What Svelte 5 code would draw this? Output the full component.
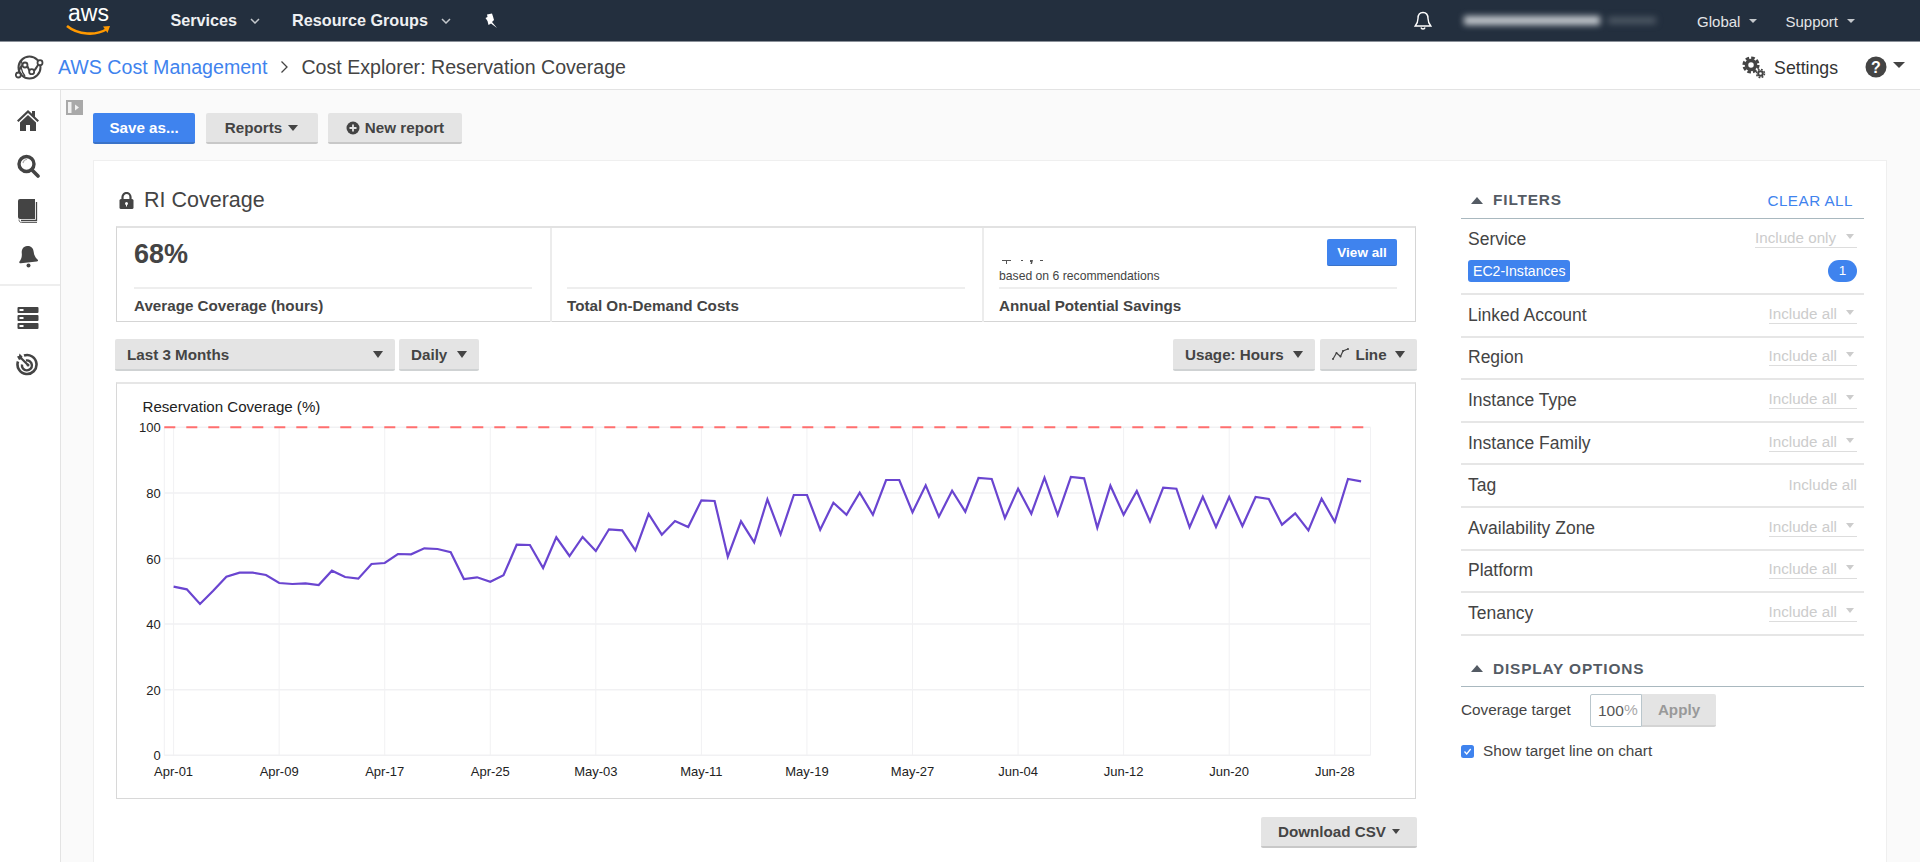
<script>
  const ys = [500,508,552,512,470,458,458,465,489,492,490,495,452,471,476,432,429,402,403,385,387,397,477,472,485,466,374,375,444,352,408,351,393,328,331,391,282,344,
    303,321,241,243,410,304,367,238,343,225,225,329,248,284,218,284,180,180,277,196,290,212,275,174,177,294,206,281,173,285,171,175,323,197,284,213,304,203,206,322,230,321,231,318,231,237,314,280,331,236,305,177,184];
  const X0 = 173.6, DX = 13.195;
  const points = ys.map((y, i) => `${(X0 + i * DX).toFixed(1)},${(420 + y / 3).toFixed(1)}`).join(' ');
  const ticks = ['Apr-01','Apr-09','Apr-17','Apr-25','May-03','May-11','May-19','May-27','Jun-04','Jun-12','Jun-20','Jun-28']
    .map((label, i) => ({ label, x: X0 + i * 8 * DX }));
  const yAxis = [100, 80, 60, 40, 20, 0].map((v) => ({ v, y: 755.3 - v * 3.28 }));
  const filters = [
    { name: 'Linked Account' }, { name: 'Region' }, { name: 'Instance Type' }, { name: 'Instance Family' },
    { name: 'Tag', plain: true }, { name: 'Availability Zone' }, { name: 'Platform' }, { name: 'Tenancy' }
  ];
</script>

<div class="page">
  <header class="topbar">
    <div class="logo">
      <span class="aws">aws</span>
      <svg class="smile" width="46" height="14" viewBox="0 0 46 14"><path d="M1 2C12 11 30 12 41 5" fill="none" stroke="#f90" stroke-width="2.600"/><path d="M37 2.500l7-.5-2.500 7z" fill="#f90"/></svg>
    </div>
    <span class="nav first">Services</span>
    <svg class="chev" width="10" height="6" viewBox="0 0 10 6"><path d="M1 1l4 4 4-4" fill="none" stroke="#c4c8cc" stroke-width="1.500"/></svg>
    <span class="nav second">Resource Groups</span>
    <svg class="chev" width="10" height="6" viewBox="0 0 10 6"><path d="M1 1l4 4 4-4" fill="none" stroke="#c4c8cc" stroke-width="1.500"/></svg>
    <svg class="pin" width="14" height="16" viewBox="0 0 14 16"><path d="M3 1.500L8 .5l1 3 1 3.500-2 2 5 6-6-4.500L4.500 12l-1-4-2-3 2-1z" fill="#fff"/></svg>
    <div class="top-right">
      <svg width="18" height="20" viewBox="0 0 18 20"><path d="M9 1.500c-3.500 0-5 2.700-5 6 0 4-1.200 5.500-2.800 7.500h15.600C15.200 13 14 11.500 14 7.500c0-3.300-1.500-6-5-6zM7 16.500c.4 2 3.600 2 4 0" fill="none" stroke="#fff" stroke-width="1.400"/></svg>
      <div class="blur"><span class="b1"></span><span class="b2"></span></div>
      <span class="small-nav global">Global</span><span class="caret c-top"></span>
      <span class="small-nav support">Support</span><span class="caret c-top"></span>
    </div>
  </header>

  <div class="subbar">
    <svg class="cm" width="29" height="25" viewBox="0 0 29 25" fill="none" stroke="#444" stroke-width="2">
      <circle cx="14.500" cy="12.500" r="11"/>
      <path d="M3.300 20C4 13 6 10 10 10c4 0 3 7 6.700 6.700C21 16.500 21 11 25 7.700"/>
      <path d="M7 4.500c-2 5-1 12 3 16.500" stroke-width="1.300"/>
      <g fill="#fff" stroke-width="1.800"><circle cx="3.300" cy="20" r="2.500"/><circle cx="10" cy="10" r="2.500"/><circle cx="16.700" cy="16.700" r="2.500"/><circle cx="25" cy="7.700" r="2.500"/></g>
    </svg>
    <a class="crumb">AWS Cost Management</a>
    <svg class="crumb-sep" width="9" height="14" viewBox="0 0 9 14"><path d="M1.500 1.500L7 7l-5.500 5.500" fill="none" stroke="#444" stroke-width="1.300"/></svg>
    <span class="crumb-cur">Cost Explorer: Reservation Coverage</span>
    <div class="sub-right">
      <svg width="24" height="23" viewBox="0 0 24 23">
        <g fill="none" stroke="#444"><circle cx="9" cy="9" r="4.500" stroke-width="3.500"/><circle cx="9" cy="9" r="7.200" stroke-width="2.800" stroke-dasharray="3.600 2.050"/><circle cx="18.500" cy="17.500" r="2.300" stroke-width="2"/><circle cx="18.500" cy="17.500" r="4" stroke-width="1.500" stroke-dasharray="1.800 1.340"/></g>
      </svg>
      <span class="settings">Settings</span>
      <svg class="help" width="22" height="22" viewBox="0 0 22 22"><circle cx="11" cy="11" r="10.500" fill="#444"/><text x="11" y="16.500" text-anchor="middle" class="qm">?</text></svg>
      <span class="caret c-help"></span>
    </div>
  </div>

  <div class="body">
    <aside class="sidebar">
      <div class="side-top">
        <svg width="24" height="23" viewBox="0 0 24 23"><path d="M12 1L1 11.500l1.500 1.500L12 4l9.500 9 1.500-1.500L19 7.700V2h-3v2.800z" fill="#444"/><path d="M12 6L4 13.500V22h6v-6h4v6h6v-8.500z" fill="#444"/></svg>
        <svg width="24" height="24" viewBox="0 0 24 24"><circle cx="10.500" cy="10" r="7.500" fill="none" stroke="#444" stroke-width="3.400"/><path d="M16 16l6 6" stroke="#444" stroke-width="3.600" stroke-linecap="round"/><path d="M7 9c.5-2 2-3.500 4-3.500" fill="none" stroke="#aaa" stroke-width="1.200"/></svg>
        <svg width="20" height="24" viewBox="0 0 20 24"><path d="M2 0h15v20H3a1 1 0 0 0 0 0H2a2 2 0 0 1-2-2V2a2 2 0 0 1 2-2z" fill="#444"/><path d="M18.500 3v18.500H3" fill="none" stroke="#444" stroke-width="1.300"/><path d="M1 20.500c0 2 1 3 2.500 3H19" fill="none" stroke="#666" stroke-width="1"/></svg>
        <svg width="20" height="23" viewBox="0 0 20 23"><path d="M10 1c-4 0-6 3-6 6.500 0 4-1.500 6.500-3.500 8.500 0 1 .5 1.500 1.500 1.500h16c1 0 1.500-.5 1.500-1.500-2-2-3.500-4.500-3.500-8.500C16 4 14 1 10 1z" fill="#444" transform="rotate(-6 10 10)"/><circle cx="10.500" cy="20.500" r="2" fill="#444"/></svg>
      </div>
      <div class="side-bot">
        <svg width="22" height="22" viewBox="0 0 22 22"><g fill="#444"><rect x="0.500" y="0" width="21" height="6" rx="1"/><rect x="0.500" y="8" width="21" height="6" rx="1"/><rect x="0.500" y="16" width="21" height="6" rx="1"/></g><g fill="#fff"><rect x="2.500" y="2" width="4" height="2"/><rect x="2.500" y="10" width="4" height="2"/><rect x="2.500" y="18" width="4" height="2"/></g></svg>
        <svg width="23" height="23" viewBox="0 0 23 23"><g fill="none" stroke="#444"><path d="M8 2.500a9.500 9.500 0 1 1-6 6" stroke-width="2.600"/><path d="M10 7.500a5 5 0 1 1-4 4" stroke-width="2.400"/></g><path d="M3 3l8.500 8.500" stroke="#444" stroke-width="2.200"/><path d="M1 3.500l2-.5.500-2.500 3 3-1 2.500-2.500 1z" fill="#444"/><circle cx="12" cy="12" r="1.500" fill="#444"/></svg>
      </div>
    </aside>

    <main class="main">
      <svg class="panel-toggle" width="17" height="15" viewBox="0 0 17 15"><rect width="17" height="15" fill="#a9a9a9"/><rect x="2" y="2" width="3.500" height="11" fill="#f1f1f1"/><path d="M9 4.500l4 3-4 3z" fill="#f1f1f1"/></svg>
      <div class="toolbar">
        <button class="btn primary save">Save as...</button>
        <button class="btn reports">Reports <span class="caret c-btn"></span></button>
        <button class="btn newrep">
          <svg width="14" height="14" viewBox="0 0 14 14"><circle cx="7" cy="7" r="6.500" fill="#444"/><path d="M7 3.500v7M3.500 7h7" stroke="#e4e4e4" stroke-width="1.800"/></svg>
          New report
        </button>
      </div>

      <section class="card">
        <div class="left">
          <h1 class="title">
            <svg width="15" height="17" viewBox="0 0 15 17"><path d="M3.500 7V5a4 4 0 0 1 8 0v2" fill="none" stroke="#444" stroke-width="2.200"/><rect x="0.500" y="7" width="14" height="10" rx="1.500" fill="#444"/><circle cx="7.500" cy="11.500" r="1.500" fill="#fff"/><rect x="7" y="11.500" width="1" height="3" fill="#fff"/></svg>
            RI Coverage
          </h1>
          <div class="stats">
            <div class="stat">
              <div class="val"><span class="big">68%</span></div>
              <div class="lab">Average Coverage (hours)</div>
            </div>
            <div class="stat">
              <div class="val"></div>
              <div class="lab">Total On-Demand Costs</div>
            </div>
            <div class="stat">
              <div class="val savings">
                <div class="sv-left">
                  <svg class="scrap" width="44" height="5" viewBox="0 0 44 5"><path d="M3 1h9v1H8v3H7V2H3zM22 1h2v1h-2zM31 1h3l-1 4h-1.500l.5-2h-1zM44 1h-3v1h3z" fill="#555"/></svg>
                  <span class="rec">based on 6 recommendations</span>
                </div>
                <button class="viewall">View all</button>
              </div>
              <div class="lab">Annual Potential Savings</div>
            </div>
          </div>

          <div class="controls">
            <button class="dd range"><span>Last 3 Months</span><span class="caret c-dd"></span></button>
            <button class="dd daily"><span>Daily</span><span class="caret c-dd"></span></button>
            <span class="spacer"></span>
            <button class="dd usage"><span>Usage: Hours</span><span class="caret c-dd"></span></button>
            <button class="dd line">
              <svg width="17" height="12" viewBox="0 0 17 12"><path d="M1 11l3.500-6 4 3.500L11 3l5-2" fill="none" stroke="#444" stroke-width="1.200"/><g fill="#444"><circle cx="1" cy="11" r="1"/><circle cx="4.500" cy="5" r="1"/><circle cx="8.500" cy="8.500" r="1"/><circle cx="11" cy="3" r="1"/><circle cx="16" cy="1" r="1"/></g></svg>
              <span>Line</span><span class="caret c-dd"></span>
            </button>
          </div>

          <div class="chart">
            <svg width="1298" height="415" viewBox="117 384 1298 415">
              <text x="142.500" y="412" class="ctitle">Reservation Coverage (%)</text>
              {#each yAxis as a}
                <line x1="164.300" x2="1370.500" y1={a.y} y2={a.y} stroke="#f1f1f3" stroke-width="1.500"/>
                <text x="160.700" y={a.y + 5} text-anchor="end" class="axis">{a.v}</text>
              {/each}
              <line x1="164.300" x2="164.300" y1="427.300" y2="755.300" stroke="#f1f1f3"/>
              <line x1="1370.500" x2="1370.500" y1="427.300" y2="755.300" stroke="#f1f1f3"/>
              {#each ticks as t}
                <line x1={t.x} x2={t.x} y1="427.300" y2="755.300" stroke="#f1f1f3"/>
                <text x={t.x} y="775.500" text-anchor="middle" class="axis">{t.label}</text>
              {/each}
              <line x1="164.300" x2="1370.500" y1="427.300" y2="427.300" stroke="#ff6f6f" stroke-width="2" stroke-dasharray="11 11"/>
              <polyline points={points} fill="none" stroke="#6a45d0" stroke-width="2.200"/>
            </svg>
          </div>

          <div class="dl-row">
            <button class="btn download">Download CSV <span class="caret c-dl"></span></button>
          </div>
        </div>

        <aside class="right">
          <div class="sec-head filters-head">
            <span class="tri"></span><span class="sec-title">FILTERS</span>
            <a class="clear">CLEAR ALL</a>
          </div>
          <div class="service">
            <div class="svc-top">
              <span class="fname">Service</span>
              <span class="sel wide"><span>Include only</span><span class="caret c-sel"></span></span>
            </div>
            <div class="svc-bot">
              <span class="tag">EC2-Instances</span>
              <span class="count">1</span>
            </div>
          </div>
          {#each filters as f}
            <div class="frow">
              <span class="fname">{f.name}</span>
              {#if f.plain}
                <span class="plain">Include all</span>
              {:else}
                <span class="sel"><span>Include all</span><span class="caret c-sel"></span></span>
              {/if}
            </div>
          {/each}

          <div class="sec-head display-head">
            <span class="tri"></span><span class="sec-title">DISPLAY OPTIONS</span>
          </div>
          <div class="target">
            <span class="tlabel">Coverage target</span>
            <div class="tinput"><span class="num">100</span><span class="pct">%</span></div>
            <button class="apply">Apply</button>
          </div>
          <label class="check">
            <svg width="13" height="13" viewBox="0 0 13 13"><rect width="13" height="13" rx="2.500" fill="#3f83ee"/><path d="M3.500 6.500l2.200 2.500 4-5" fill="none" stroke="#fff" stroke-width="1.300"/></svg>
            <span>Show target line on chart</span>
          </label>
        </aside>
      </section>
    </main>
  </div>
</div>

<style>
  :global(html), :global(body) { margin: 0; height: 100%; overflow: hidden; }
  .page { height: 862px; overflow: hidden; display: flex; flex-direction: column; font-family: "Liberation Sans", Arial, sans-serif; color: #444; background: #fff; }
  button { font-family: inherit; border: 0; cursor: pointer; margin: 0; padding: 0; }
  a { cursor: pointer; }

  .caret { display: inline-block; width: 0; height: 0; border-left: 5px solid transparent; border-right: 5px solid transparent; border-top: 6px solid #444; }

  .topbar { height: 41px; flex: none; background: #232f3e; border-bottom: 1px solid #8a9099; display: flex; align-items: center; padding-left: 68px; color: #fff; }
  .logo { width: 46px; height: 41px; display: flex; flex-direction: column; }
  .aws { display: block; font-size: 23px; line-height: 26px; height: 24px; margin-top: 0; color: #fff; }
  .smile { margin: 0 0 0 -2px; }
  .nav { font-size: 16.200px; font-weight: 700; color: #eef0f2; }
  .first { margin-left: 56.500px; }
  .second { margin-left: 32px; }
  .chev { margin-left: 13px; }
  .pin { margin-left: 33px; }
  .top-right { margin-left: auto; display: flex; align-items: center; padding-right: 65px; }
  .blur { width: 205px; height: 14px; margin-left: 32px; display: flex; align-items: center; filter: blur(3px); }
  .b1 { width: 136px; height: 9px; background: #c4c9ce; }
  .b2 { width: 48px; height: 7px; margin-left: 8px; background: #4d5864; }
  .small-nav { font-size: 15px; color: #e3e5e7; margin-top: 1px; }
  .global { margin-left: 28px; }
  .support { margin-left: 28px; }
  .c-top { border-left-width: 4px; border-right-width: 4px; border-top: 4px solid #c4c8cc; margin-left: 9px; }

  .subbar { height: 48px; box-sizing: border-box; padding-top: 3px; flex: none; border-bottom: 1px solid #e3e3e3; display: flex; align-items: center; padding-left: 15px; background: #fff; }
  .crumb { font-size: 19.600px; color: #3f83ee; margin-left: 14px; }
  .crumb-sep { margin-left: 13px; }
  .crumb-cur { font-size: 19.600px; color: #444; margin-left: 12px; }
  .sub-right { margin-left: auto; display: flex; align-items: center; padding-right: 15px; }
  .settings { font-size: 17.700px; color: #333; margin-left: 8px; margin-top: 2px; }
  .help { margin-left: 27px; }
  .qm { font: 700 16px "Liberation Sans", sans-serif; fill: #fff; }
  .c-help { margin-left: 6px; margin-top: -5px; border-left-width: 6px; border-right-width: 6px; }

  .body { flex: 1; display: flex; min-height: 0; }
  .sidebar { width: 60px; flex: none; border-right: 1px solid #e3e3e3; background: #fff; }
  .side-top { height: 196px; box-sizing: border-box; border-bottom: 2px solid #eee; display: flex; flex-direction: column; align-items: center; gap: 21.500px; padding: 19px 5px 0 0; }
  .side-bot { display: flex; flex-direction: column; align-items: center; gap: 24px; padding: 21px 5px 0 0; }

  .main { position: relative; flex: 1; min-width: 0; background: #fafafa; padding: 23px 33px 0 32px; }
  .panel-toggle { position: absolute; left: 5px; top: 10px; }
  .toolbar { display: flex; gap: 10.500px; height: 31px; }
  .btn { height: 31px; box-sizing: border-box; background: #e4e4e4; border-bottom: 2px solid #c8c8c8; border-radius: 2px; font-size: 15.200px; font-weight: 700; color: #444; display: flex; align-items: center; justify-content: center; gap: 5px; }
  .primary { background: #3f83ee; border-bottom-color: #3a72c8; color: #fff; }
  .save { width: 102px; }
  .reports { width: 112px; }
  .newrep { width: 134px; }
  .c-btn { margin-left: 1px; }

  .card { margin-top: 16px; height: 760px; box-sizing: border-box; background: #fff; border: 1px solid #efefef; padding: 27px 22px 0 22px; display: flex; gap: 45px; }
  .left { width: 1300px; flex: none; }
  .title { margin: 0 0 0 3px; height: 25px; font-size: 21.500px; font-weight: 400; color: #444; display: flex; align-items: center; gap: 10px; line-height: 25px; }

  .stats { margin-top: 13px; height: 96px; box-sizing: border-box; border: 1px solid #d5d5d5; border-top: 2px solid #e2e2e2; display: grid; grid-template-columns: 433px 432px 1fr; }
  .stat { padding: 0 17px 0 15px; display: flex; flex-direction: column; border-left: 2px solid #ececec; }
  .stat:first-child { border-left: 0; padding: 0 18px 0 17px; }
  .stat:last-child { padding-right: 18px; }
  .val { height: 61px; flex: none; box-sizing: border-box; border-bottom: 2px solid #eee; }
  .big { display: block; font-size: 27px; font-weight: 700; line-height: 30px; margin-top: 11px; color: #444; }
  .lab { font-size: 15.200px; font-weight: 700; line-height: 33px; color: #444; }
  .savings { display: flex; justify-content: space-between; }
  .sv-left { display: flex; flex-direction: column; }
  .scrap { margin-top: 31px; }
  .rec { font-size: 12.200px; color: #444; line-height: 16px; margin-top: 4px; }
  .viewall { width: 70px; height: 27px; margin-top: 11px; background: #3f83ee; border-bottom: 1px solid #3a72c8; border-radius: 2px; color: #fff; font-size: 13.500px; font-weight: 700; }

  .controls { margin-top: 17px; height: 32px; display: flex; margin-left: -1px; }
  .dd { height: 32px; box-sizing: border-box; background: #e4e4e4; border-bottom: 2px solid #cfd2d3; border-radius: 2px; font-size: 15.200px; font-weight: 700; color: #444; display: flex; align-items: center; justify-content: space-between; padding: 0 12px; }
  .c-dd { border-left-width: 5px; border-right-width: 5px; border-top-width: 7px; }
  .range { width: 280px; }
  .daily { width: 80px; margin-left: 4px; }
  .spacer { flex: 1; }
  .usage { width: 142px; margin-right: 5px; }
  .line { width: 97px; margin-right: -1px; }
  .line svg { margin-right: -2px; }

  .chart { margin-top: 11px; height: 417px; box-sizing: border-box; border: 1px solid #d8d8d8; border-top: 2px solid #e6e6e6; }
  .chart svg { display: block; }
  .ctitle { font: 15.100px "Liberation Sans", sans-serif; fill: #222; }
  .axis { font: 13px "Liberation Sans", sans-serif; fill: #222; }

  .dl-row { display: flex; justify-content: flex-end; margin-top: 18px; margin-right: -1px; }
  .download { width: 156px; }
  .c-dl { border-left-width: 4px; border-right-width: 4px; border-top-width: 5px; margin-left: 1px; }

  .right { width: 403px; flex: none; }
  .sec-head { height: 32px; display: flex; align-items: center; border-bottom: 1px solid #a9b8bf; box-sizing: border-box; padding: 0 11px 4px 10px; }
  .filters-head { height: 31px; padding-bottom: 6px; }
  .display-head { margin-top: 19.700px; }
  .tri { width: 0; height: 0; border-left: 6px solid transparent; border-right: 6px solid transparent; border-bottom: 7px solid #545b64; }
  .sec-title { margin-left: 10px; font-size: 15.400px; font-weight: 700; letter-spacing: .85px; color: #545b64; }
  .clear { margin-left: auto; font-size: 15.200px; color: #3f83ee; letter-spacing: .5px; }

  .service { height: 76px; box-sizing: border-box; border-bottom: 2px solid #e6e6e6; padding: 0 7px; display: flex; flex-direction: column; }
  .svc-top { height: 41px; display: flex; justify-content: space-between; align-items: center; }
  .svc-bot { display: flex; justify-content: space-between; align-items: center; }
  .frow { height: 42.600px; box-sizing: border-box; border-bottom: 2px solid #e6e6e6; padding: 0 7px; display: flex; justify-content: space-between; align-items: center; }
  .fname { font-size: 17.500px; color: #444; }
  .sel { width: 88.500px; height: 20px; margin-top: -3px; box-sizing: border-box; border-bottom: 1px solid #ddd; font-size: 15.200px; color: #ccc; display: flex; align-items: center; justify-content: space-between; }
  .sel.wide { width: 102px; }
  .c-sel { border-left-width: 4.500px; border-right-width: 4.500px; border-top: 5px solid #ccc; margin-right: 3px; margin-top: -2px; }
  .plain { font-size: 15.200px; color: #ccc; margin-top: -3px; }
  .tag { height: 22px; padding: 0 5px; background: #3f83ee; border-radius: 3px; color: #fff; font-size: 14.100px; line-height: 22px; }
  .count { width: 29px; height: 22px; border-radius: 11px; background: #3f83ee; color: #fff; font-size: 13.500px; text-align: center; line-height: 22px; }

  .target { display: flex; align-items: center; margin-top: 7px; height: 33px; }
  .tlabel { font-size: 15.300px; color: #444; width: 129px; flex: none; margin-top: -1px; }
  .tinput { width: 52px; height: 33px; box-sizing: border-box; border: 1px solid #b9c6cc; border-radius: 2px 0 0 2px; display: flex; align-items: center; padding-left: 7px; font-size: 15.500px; color: #555; }
  .pct { color: #aaa; margin-top: -1px; }
  .apply { width: 74px; height: 33px; box-sizing: border-box; background: #e4e4e4; border-bottom: 2px solid #d4d4d4; border-radius: 0 2px 2px 0; font-size: 15.200px; font-weight: 700; color: #999; }
  .check { display: flex; align-items: center; gap: 9px; margin-top: 16px; font-size: 15.300px; color: #444; line-height: 16px; }
</style>
